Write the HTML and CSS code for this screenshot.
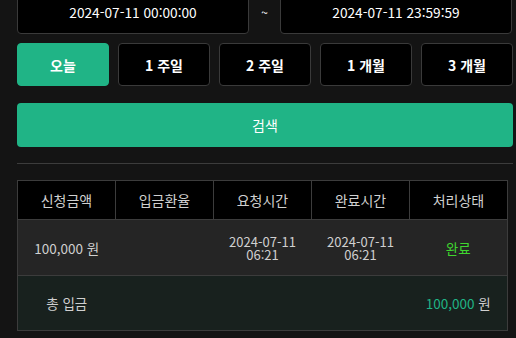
FILE: index.html
```html
<!DOCTYPE html>
<html lang="ko">
<head>
    <meta charset="UTF-8">
    <meta name="viewport" content="width=device-width, initial-scale=1.0">
    <title>입금 내역</title>
    <link rel="stylesheet" href="styles.css">
</head>
<body>
    <div class="page">
        <div class="date-range">
            <input type="text" class="date-input" value="2024-07-11 00:00:00">
            <span class="tilde">~</span>
            <input type="text" class="date-input" value="2024-07-11 23:59:59">
        </div>

        <div class="period-group">
            <button class="period-btn active">오늘</button>
            <button class="period-btn">1 주일</button>
            <button class="period-btn">2 주일</button>
            <button class="period-btn">1 개월</button>
            <button class="period-btn">3 개월</button>
        </div>

        <button class="search-btn">검색</button>

        <hr class="divider">

        <table class="history">
            <thead>
                <tr>
                    <th>신청금액</th>
                    <th>입금환율</th>
                    <th>요청시간</th>
                    <th>완료시간</th>
                    <th>처리상태</th>
                </tr>
            </thead>
            <tbody>
                <tr class="row">
                    <td>100,000 원</td>
                    <td></td>
                    <td class="time">2024-07-11<br>06:21</td>
                    <td class="time">2024-07-11<br>06:21</td>
                    <td class="done">완료</td>
                </tr>
                <tr class="total">
                    <td>총 입금</td>
                    <td colspan="3"></td>
                    <td><span class="sum">100,000</span> 원</td>
                </tr>
            </tbody>
        </table>
    </div>
</body>
</html>
```

FILE: styles.css
```css
body {
    margin: 0;
    background-color: #141414;
    font-family: "Noto Sans CJK KR", "Noto Sans", sans-serif;
    color: #d0d0d0;
    overflow: hidden;
}
.page {
    width: 496px;
    padding: 0 3px 0 17px;
    margin-top: -10px;
}
.date-range {
    display: flex;
    align-items: center;
    height: 44px;
}
.date-input {
    flex: 1;
    height: 44px;
    box-sizing: border-box;
    background-color: #000;
    border: 1px solid #3a3a3a;
    border-radius: 4px;
    color: #fff;
    font-family: inherit;
    font-size: 13.7px;
    text-align: center;
    padding: 0;
}
.date-range .date-input:last-child {
    margin-right: 1px;
}
.tilde {
    width: 31px;
    text-align: center;
    color: #fff;
    font-size: 12px;
    line-height: 12px;
}
.period-group {
    display: flex;
    gap: 9px;
    margin-top: 9px;
}
.period-btn {
    flex: 1;
    height: 43px;
    background-color: #000;
    border: 1px solid #3a3a3a;
    border-radius: 4px;
    color: #fff;
    font-family: inherit;
    font-size: 14px;
    font-weight: bold;
    padding: 0;
}
.period-btn.active {
    background-color: #20b486;
    border-color: #20b486;
}
.search-btn {
    display: block;
    width: 100%;
    height: 44px;
    margin-top: 17px;
    background-color: #20b486;
    border: none;
    border-radius: 4px;
    color: #fff;
    font-family: inherit;
    font-size: 14px;
}
.divider {
    border: none;
    border-top: 1px solid #3c3c3c;
    margin: 16px 0 16px;
}
.history {
    width: 491px;
    border-collapse: collapse;
    table-layout: fixed;
    font-size: 13.5px;
    text-align: center;
}
.history th {
    background-color: #000;
    border: 1px solid #3c3c3c;
    height: 38px;
    padding: 0;
    font-size: 14px;
    font-weight: normal;
    color: #d0d0d0;
}
.history td {
    padding: 0;
}
.row td {
    background-color: #252525;
    height: 54px;
    border-top: 1px solid #3c3c3c;
    border-bottom: 1px solid #3c3c3c;
}
.row td:first-child {
    border-left: 1px solid #3c3c3c;
}
.row td:last-child {
    border-right: 1px solid #3c3c3c;
}
.row .time {
    font-size: 13px;
    line-height: 13px;
    padding-top: 1px;
}
.row .done {
    color: #3fd62f;
}
.total td {
    background-color: #18211e;
    height: 54px;
    border-bottom: 1px solid #3c3c3c;
}
.total td:first-child {
    border-left: 1px solid #3c3c3c;
}
.total td:last-child {
    border-right: 1px solid #3c3c3c;
}
.sum {
    color: #20b486;
}
```
